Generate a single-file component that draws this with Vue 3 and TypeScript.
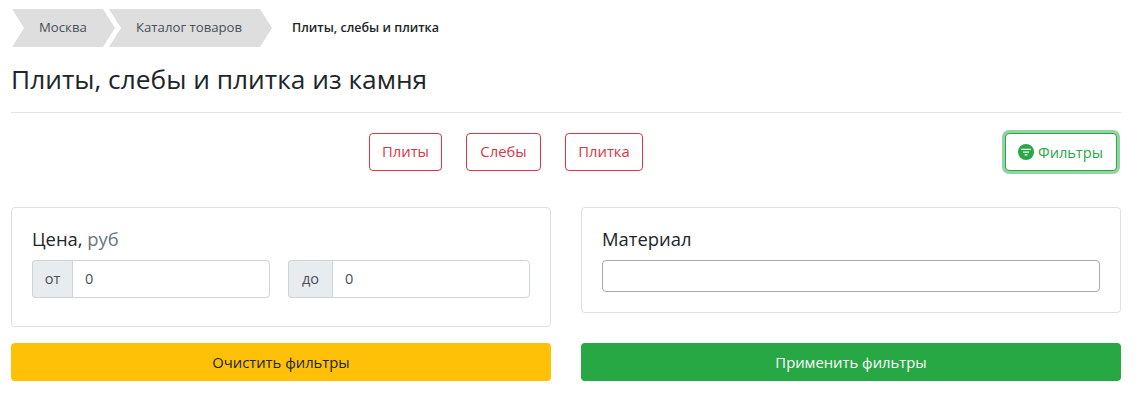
<template>
  <div class="page">
    <nav class="crumbs">
      <a class="crumb first">Москва</a>
      <a class="crumb second">Каталог товаров</a>
      <span class="crumb-current">Плиты, слебы и плитка</span>
    </nav>

    <h1 class="title">Плиты, слебы и плитка из камня</h1>

    <div class="tabs-row">
      <div class="tabs">
        <button v-for="tab in tabs" :key="tab" class="btn-tab">{{ tab }}</button>
      </div>
      <button class="btn-filter">
        <svg class="filter-icon" viewBox="0 0 16 16" width="16" height="16">
          <circle cx="8" cy="8" r="8" fill="#28a745" />
          <path d="M3.2 5.4h9.6M5 8.1h6M6.6 10.8h2.8" stroke="#fff" stroke-width="1.3" fill="none" />
        </svg>
        Фильтры
      </button>
    </div>

    <div class="filters">
      <div class="col">
        <div class="card">
          <div class="card-title">Цена, <span class="muted">руб</span></div>
          <div class="range">
            <div class="input-group">
              <span class="addon">от</span>
              <input class="field" type="text" value="0" />
            </div>
            <div class="input-group">
              <span class="addon">до</span>
              <input class="field" type="text" value="0" />
            </div>
          </div>
        </div>
        <button class="btn-wide yellow">Очистить фильтры</button>
      </div>
      <div class="col">
        <div class="card card-material">
          <div class="card-title">Материал</div>
          <input class="select-box" type="text" />
        </div>
        <button class="btn-wide green">Применить фильтры</button>
      </div>
    </div>
  </div>
</template>

<script setup lang="ts">
const tabs: string[] = ['Плиты', 'Слебы', 'Плитка']
</script>

<style>
body {
  margin: 0;
  background: #fff;
}
</style>

<style scoped>
.page {
  width: 1110px;
  margin-left: 11px;
  padding-top: 9px;
  font-family: "Open Sans", "Noto Sans", sans-serif;
  color: #212529;
}

.crumbs {
  display: flex;
  align-items: center;
  height: 38px;
  font-size: 13.2px;
}

.crumb {
  display: flex;
  align-items: center;
  height: 38px;
  padding-bottom: 2px;
  background: #dedede;
  color: #495057;
  clip-path: polygon(0 0, calc(100% - 12px) 0, 100% 50%, calc(100% - 12px) 100%, 0 100%, 12px 50%);
}

.first {
  width: 103px;
  margin-left: 1px;
  padding-left: 27px;
  box-sizing: border-box;
}

.second {
  width: 163px;
  margin-left: -6px;
  padding-left: 27px;
  box-sizing: border-box;
}

.crumb-current {
  margin-left: 20px;
  padding-bottom: 2px;
  font-weight: 600;
  font-size: 12.5px;
}

.title {
  margin: 16px 0 0;
  height: 49px;
  font-size: 26.3px;
  font-weight: 400;
  line-height: 32px;
  border-bottom: 1px solid #e2e2e2;
}

.tabs-row {
  position: relative;
  display: flex;
  justify-content: flex-end;
  margin-top: 20px;
  padding-right: 4px;
}

.tabs {
  position: absolute;
  left: 358px;
  top: 0;
  display: flex;
  gap: 24px;
}

button {
  font-family: inherit;
}

.btn-tab {
  height: 38px;
  padding: 0 0 2px;
  background: #fff;
  border: 1px solid #dc3545;
  border-radius: 4px;
  color: #dc3545;
  font-size: 14.8px;
}

.btn-tab:nth-child(1) {
  width: 73px;
}

.btn-tab:nth-child(2) {
  width: 75px;
}

.btn-tab:nth-child(3) {
  width: 78px;
}

.btn-filter {
  display: flex;
  align-items: center;
  gap: 4px;
  width: 112px;
  height: 38px;
  padding: 0 0 1px 12px;
  background: #fff;
  border: 1px solid #28a745;
  border-radius: 4px;
  color: #28a745;
  font-size: 14.6px;
  box-shadow: 0 0 0 3px rgba(40, 167, 69, 0.5);
}

.filter-icon {
  flex: none;
}

.filters {
  display: grid;
  grid-template-columns: 540px 540px;
  gap: 30px;
  margin-top: 36px;
  align-items: start;
}

.col {
  display: flex;
  flex-direction: column;
  gap: 16px;
}

.card {
  box-sizing: border-box;
  height: 120px;
  padding: 19px 20px 20px;
  border: 1px solid #dfe0e1;
  border-radius: 4px;
  background: #fff;
}

.card-material {
  height: 106px;
  margin-bottom: 14px;
}

.card-title {
  height: 33px;
  font-size: 18.4px;
  line-height: 24px;
  color: #212529;
}

.muted {
  color: #6c757d;
}

.range {
  display: flex;
  gap: 18px;
}

.input-group {
  display: flex;
  flex: none;
  height: 38px;
  width: 238px;
}

.input-group + .input-group {
  width: 242px;
}

.addon {
  display: flex;
  align-items: center;
  justify-content: center;
  flex: none;
  width: 40px;
  box-sizing: border-box;
  padding-bottom: 2px;
  background: #e9ecef;
  border: 1px solid #ced4da;
  border-right: none;
  border-radius: 4px 0 0 4px;
  color: #495057;
  font-size: 14.5px;
}

.input-group + .input-group .addon {
  width: 44px;
}

.field {
  flex: 1;
  min-width: 0;
  box-sizing: border-box;
  padding: 0 12px 2px;
  border: 1px solid #ced4da;
  border-radius: 0 4px 4px 0;
  color: #495057;
  font-family: inherit;
  font-size: 14.5px;
  outline: none;
}

.select-box {
  display: block;
  box-sizing: border-box;
  width: 498px;
  height: 32px;
  border: 1px solid #a9a9a9;
  border-radius: 4px;
  outline: none;
}

.btn-wide {
  height: 38px;
  border: none;
  border-radius: 4px;
  font-size: 14.8px;
}

.yellow {
  background: #ffc107;
  color: #212529;
}

.green {
  background: #28a745;
  color: #fff;
}
</style>
